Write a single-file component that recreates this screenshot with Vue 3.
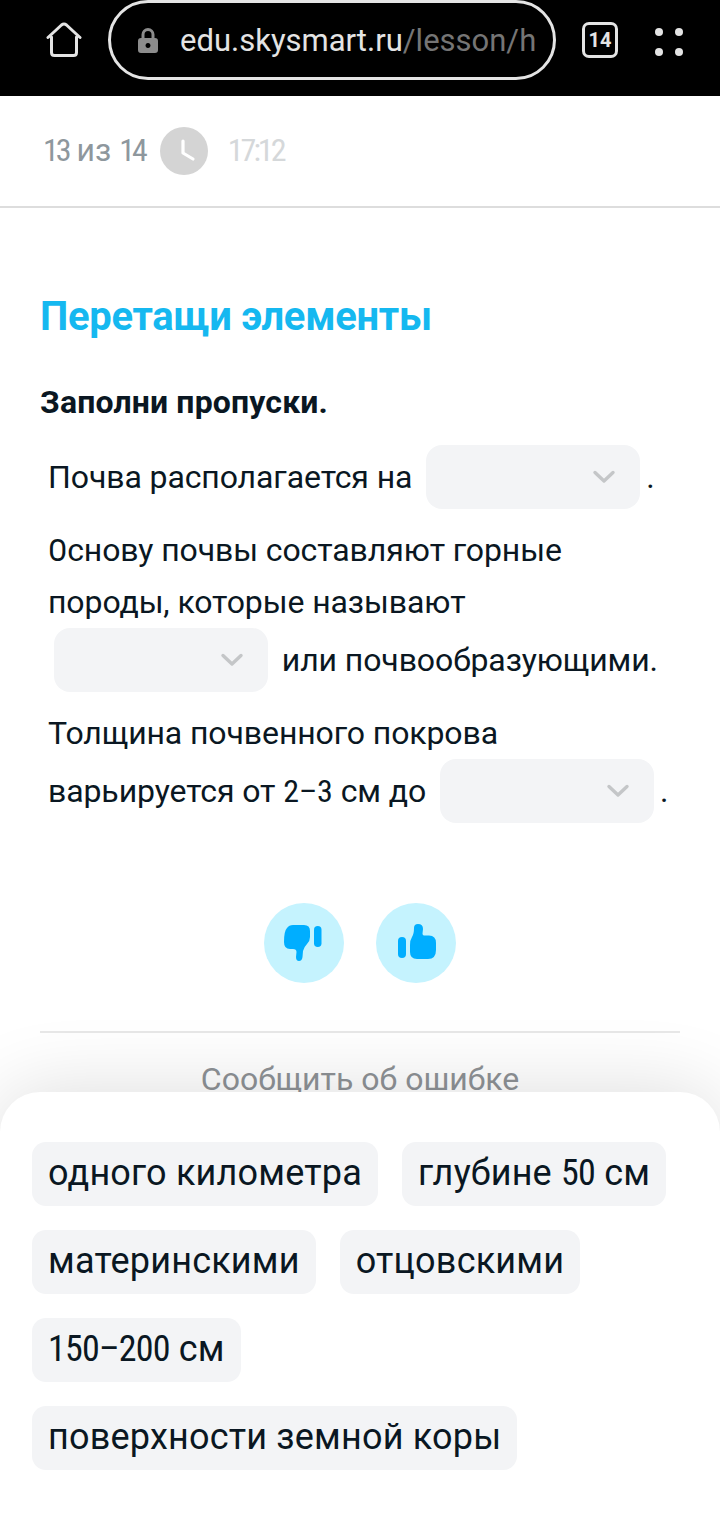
<script setup>
const options = [
  "одного километра",
  "глубине 50 см",
  "материнскими",
  "отцовскими",
  "150–200 см",
  "поверхности земной коры",
];

// цифры в оригинале заметно уже букв
const splitDigits = (text) => text.split(/(\d[\d–]*)/).filter(Boolean);
const isDigits = (part) => /^\d/.test(part);
</script>

<template>
  <div class="page">
    <header class="browser">
      <svg class="home" width="36" height="36" viewBox="0 0 36 36" fill="none">
        <path d="M2 15.5 L15.5 3 Q18 1 20.5 3 L34 15.5" stroke="#e4e4e4" stroke-width="3" stroke-linecap="round" stroke-linejoin="round" />
        <path d="M5.5 15 V30.5 Q5.5 33.5 8.5 33.5 H27.5 Q30.5 33.5 30.5 30.5 V15" stroke="#e4e4e4" stroke-width="3" stroke-linecap="round" />
      </svg>
      <div class="address">
        <svg class="lock" width="20" height="25" viewBox="0 0 20 25">
          <path d="M5 11 V6.5 a5 5 0 0 1 10 0 V11" fill="none" stroke="#8c8c8c" stroke-width="3" />
          <path fill-rule="evenodd" d="M3 10 H17 a3 3 0 0 1 3 3 V22 a3 3 0 0 1 -3 3 H3 a3 3 0 0 1 -3 -3 V13 a3 3 0 0 1 3 -3 Z M10 15 a2.5 2.5 0 1 0 0.01 0 Z" fill="#8c8c8c" />
        </svg>
        <div class="url"><span>edu.skysmart.ru</span><span class="path">/lesson/h</span></div>
      </div>
      <div class="tabs">14</div>
      <div class="dots"><i></i><i></i><i></i><i></i></div>
    </header>

    <div class="progress">
      <span class="count"><span class="num">13</span> из <span class="num">14</span></span>
      <span class="clock">
        <svg width="48" height="48" viewBox="0 0 48 48" fill="none">
          <path d="M23 14 V26 L33 32" stroke="#fff" stroke-width="3.2" stroke-linecap="round" stroke-linejoin="round" />
        </svg>
      </span>
      <span class="time num">17:12</span>
    </div>

    <main class="content">
      <h1>Перетащи элементы</h1>
      <h2>Заполни пропуски.</h2>
      <div class="task">
        <p>Почва располагается на <span class="drop"><svg width="24" height="14" viewBox="0 0 24 14" fill="none"><path d="M3 2.5 L12 11 L21 2.5" stroke="#c4c6c8" stroke-width="3.4" stroke-linecap="round" stroke-linejoin="round" /></svg></span>.</p>
        <p><span class="num">О</span>снову почвы составляют горные породы, которые называют <span class="drop"><svg width="24" height="14" viewBox="0 0 24 14" fill="none"><path d="M3 2.5 L12 11 L21 2.5" stroke="#c4c6c8" stroke-width="3.4" stroke-linecap="round" stroke-linejoin="round" /></svg></span> или почвообразующими.</p>
        <p>Толщина почвенного покрова варьируется от <span class="num">2–3</span> см до <span class="drop"><svg width="24" height="14" viewBox="0 0 24 14" fill="none"><path d="M3 2.5 L12 11 L21 2.5" stroke="#c4c6c8" stroke-width="3.4" stroke-linecap="round" stroke-linejoin="round" /></svg></span>.</p>
      </div>

      <div class="rate">
        <button class="thumb">
          <svg width="40" height="40" viewBox="0 0 40 40" fill="#00aeff">
            <path d="M9 2 H20 Q26 2 26 8 V14 Q26 18 23 21 Q20 24 19 28 L18.5 34 Q18 38 15 38 Q12 38 12 34 L12.5 29 Q12.5 26 9 26 H6 Q0 26 0 19 Q0 8 3 5 Q5 2 9 2 Z" />
            <rect x="30" y="3" width="7.5" height="21" rx="3.75" />
          </svg>
        </button>
        <button class="thumb">
          <svg width="40" height="40" viewBox="0 0 40 40" fill="#00aeff">
            <rect x="2" y="14" width="8" height="21" rx="4" />
            <path d="M22 1 Q27 1 27 6 L26.5 10.5 Q26.5 12.5 28 12.5 H33 Q40 12.5 40 20 V27 Q40 36 32 36 H21 Q14 36 14 29 V22 Q14 17 16 14 Q18 11 18 5 Q18 1 22 1 Z" />
          </svg>
        </button>
      </div>

      <div class="report">Сообщить об ошибке</div>
    </main>

    <section class="sheet">
      <div v-for="option in options" :key="option" class="chip">
        <span v-for="part in splitDigits(option)" :key="part" :class="{ num: isDigits(part) }">{{ part }}</span>
      </div>
    </section>
  </div>
</template>

<style>
body {
  background: #fff;
}
</style>

<style scoped>
.page {
  position: relative;
  width: 720px;
  height: 1520px;
  overflow: hidden;
  background: #fff;
  font-family: Roboto, "Liberation Sans", sans-serif;
  color: #0a1722;
}

.num {
  font-stretch: 75%;
}

.browser {
  height: 96px;
  background: #000;
  display: flex;
  align-items: flex-start;
  box-sizing: border-box;
  padding-left: 46px;
}

.home {
  margin-top: 22px;
}

.address {
  width: 448px;
  height: 80px;
  margin-left: 26px;
  box-sizing: border-box;
  border: 3px solid #e4e4e4;
  border-radius: 40px;
  display: flex;
  align-items: center;
  padding-left: 27px;
}

.url {
  margin-left: 22px;
  width: 357px;
  overflow: hidden;
  white-space: nowrap;
  font-size: 31px;
  color: #e4e4e4;
}

.path {
  color: #757575;
}

.tabs {
  width: 36px;
  height: 36px;
  margin: 22px 0 0 26px;
  box-sizing: border-box;
  border: 3px solid #e4e4e4;
  border-radius: 7px;
  color: #e4e4e4;
  font-size: 20px;
  font-weight: 700;
  display: flex;
  align-items: center;
  justify-content: center;
}

.dots {
  margin: 28px 0 0 37px;
  display: grid;
  grid-template-columns: 8px 8px;
  gap: 12px;
}

.dots i {
  width: 8px;
  height: 8px;
  border-radius: 50%;
  background: #e4e4e4;
}

.progress {
  height: 112px;
  box-sizing: border-box;
  border-bottom: 2px solid #ddd;
  display: flex;
  align-items: center;
  padding-left: 43px;
  font-size: 32px;
}

.count {
  color: #8e979d;
  white-space: pre;
  margin-top: -2px;
}

.count .num,
.time {
  letter-spacing: -3px;
}

.clock {
  width: 48px;
  height: 48px;
  margin-left: 15px;
  border-radius: 50%;
  background: #d4d4d4;
}

.time {
  margin-left: 20px;
  margin-top: -2px;
  color: #d5d8da;
}

.content {
  padding: 0 40px;
}

h1 {
  margin: 85px 0 0;
  font-size: 40px;
  line-height: 48px;
  font-weight: 700;
  letter-spacing: -0.3px;
  color: #15b8f0;
}

h2 {
  margin: 41px 0 0;
  font-size: 32px;
  line-height: 40px;
  font-weight: 700;
  letter-spacing: 0.15px;
}

.task {
  margin-top: 23px;
  padding-left: 8px;
  font-size: 32px;
  line-height: 52px;
  letter-spacing: -0.1px;
}

.task p {
  margin: 0 0 15px;
}

.drop {
  display: inline-flex;
  align-items: center;
  justify-content: flex-end;
  width: 214px;
  height: 64px;
  margin: 0 6px;
  padding-right: 24px;
  box-sizing: border-box;
  border-radius: 16px;
  background: #f3f4f6;
  vertical-align: 4px;
}

.rate {
  display: flex;
  justify-content: center;
  gap: 32px;
  margin-top: 80px;
}

.thumb {
  width: 80px;
  height: 80px;
  padding: 0;
  border: none;
  border-radius: 50%;
  background: #c5f3fe;
  display: flex;
  align-items: center;
  justify-content: center;
}

.report {
  margin-top: 48px;
  padding-top: 26px;
  border-top: 2px solid #e8e8e8;
  text-align: center;
  font-size: 32px;
  line-height: 40px;
  color: #8e9296;
}

.sheet {
  position: absolute;
  left: 0;
  right: 0;
  top: 1092px;
  bottom: 0;
  box-sizing: border-box;
  padding: 50px 32px 0;
  background: #fff;
  border-radius: 40px 40px 0 0;
  box-shadow: 0 0 80px rgba(0, 0, 0, 0.14);
  display: flex;
  flex-wrap: wrap;
  align-content: flex-start;
  gap: 24px;
}

.chip {
  height: 64px;
  padding: 0 16px;
  border-radius: 14px;
  background: #f3f4f6;
  font-size: 36px;
  line-height: 62px;
  letter-spacing: 0.2px;
  color: #0a1722;
}

.chip .num {
  letter-spacing: -0.8px;
}
</style>
